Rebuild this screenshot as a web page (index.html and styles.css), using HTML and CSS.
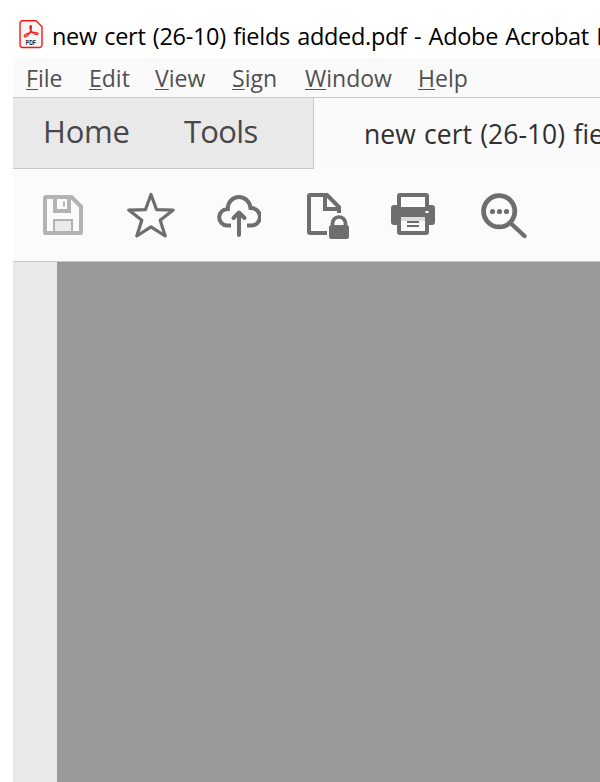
FILE: index.html
```html
<!DOCTYPE html>
<html lang="en">
<head>
<meta charset="utf-8">
<title>new cert (26-10) fields added.pdf - Adobe Acrobat</title>
<link rel="stylesheet" href="styles.css">
</head>
<body>
<div class="window">
  <header class="titlebar">
    <svg class="app-icon" viewBox="0 0 24 30">
      <path d="M3.500 1.800H17l6 6v18.200a2.500 2.500 0 0 1-2.500 2.500h-17A2.500 2.500 0 0 1 1 26V4.300A2.500 2.500 0 0 1 3.500 1.800z" fill="#f5f5f5" stroke="#f5190b" stroke-width="1.400"/>
      <path d="M5.500 17.500c-1-1 2-3 5-3.600 3.500-.7 8-.9 8.300.6.300 1.500-3 1-5-.8-2.200-2-3.600-5.800-2.600-6.800 1.300-1 1.700 1.700.3 5-1.500 3.600-4.600 7-6 5.600z" fill="none" stroke="#f0201c" stroke-width="1.400"/>
      <text class="app-icon-label" x="6.800" y="26" textLength="10" lengthAdjust="spacingAndGlyphs">PDF</text>
    </svg>
    <h1 class="window-title">new cert (26-10) fields added.pdf - Adobe Acrobat Reader</h1>
  </header>
  <nav class="menubar">
    <span class="file"><u>F</u>ile</span>
    <span class="edit"><u>E</u>dit</span>
    <span class="view"><u>V</u>iew</span>
    <span class="sign"><u>S</u>ign</span>
    <span class="win"><u>W</u>indow</span>
    <span class="help"><u>H</u>elp</span>
  </nav>
  <div class="tabs">
    <div class="tab-group"><span class="home">Home</span><span class="tools">Tools</span></div>
    <div class="doc-tab">new cert (26-10) fields added.pdf</div>
  </div>
  <div class="toolbar">
    <svg class="save" width="40" height="48" viewBox="43 192 40 48">
      <path d="M46 197h25.500l9.500 9.500V232a1 1 0 0 1-1 1H46a1 1 0 0 1-1-1V198a1 1 0 0 1 1-1z" fill="none" stroke="#b3b3b3" stroke-width="4"/>
      <path d="M55 196v15H69v-15" fill="none" stroke="#b3b3b3" stroke-width="4"/>
      <path d="M64 201.500v5" stroke="#b3b3b3" stroke-width="2"/>
      <path d="M54 233v-13h18v13" fill="#eaeaea" stroke="#b3b3b3" stroke-width="2"/>
      <path d="M44 233h38" stroke="#b3b3b3" stroke-width="4"/>
    </svg>
    <svg class="star" width="48" height="48" viewBox="127 192 48 48">
      <path d="M151 194.500l5.600 15.200 16.600.400-13 10.200 5 15.700-14.200-9.200-14.200 9.200 5-15.700-13-10.200 16.600-.400z" fill="none" stroke="#6e6e6e" stroke-width="3.200" stroke-linejoin="round"/>
    </svg>
    <svg class="cloud" width="44" height="48" viewBox="217 192 44 48">
      <path d="M231 225.500h-4a8.200 8.200 0 0 1 .8-16.400c-.2-7 5-12 11.200-12 6 0 11 4.600 11.500 11h.5a8.700 8.700 0 0 1 .5 17.400H247" fill="none" stroke="#6e6e6e" stroke-width="4"/>
      <path d="M239 235v-22m-5.500 5l5.500-5.500 5.500 5.500" fill="none" stroke="#6e6e6e" stroke-width="4" stroke-linecap="round" stroke-linejoin="round"/>
    </svg>
    <svg class="lock" width="42" height="48" viewBox="307 192 42 48">
      <path d="M327 233h-17a1 1 0 0 1-1-1v-36a1 1 0 0 1 1-1h17l12 12v6M325 195v14h14" fill="none" stroke="#6e6e6e" stroke-width="4"/>
      <path d="M332.500 226v-2.500a6.500 6.500 0 0 1 13 0v2.500" fill="none" stroke="#6e6e6e" stroke-width="3.700"/>
      <rect x="329" y="225" width="20" height="14" rx="2.500" fill="#6e6e6e"/>
    </svg>
    <svg class="print" width="44" height="48" viewBox="391 192 44 48">
      <path d="M399 209v-13a1 1 0 0 1 1-1h26a1 1 0 0 1 1 1v13" fill="none" stroke="#6e6e6e" stroke-width="4"/>
      <path d="M394 205h3v2h32v-2h3a3 3 0 0 1 3 3v14a3 3 0 0 1-3 3h-38a3 3 0 0 1-3-3v-14a3 3 0 0 1 3-3z" fill="#6e6e6e"/>
      <path d="M399 215h28v17a1 1 0 0 1-1 1h-26a1 1 0 0 1-1-1z" fill="#fbfbfb" stroke="#6e6e6e" stroke-width="4"/>
      <path d="M395 212h36v5h-36z" fill="#6e6e6e"/>
      <path d="M401 217h24v4h-24z" fill="#dcdcdc"/>
      <path d="M407 222h12M407 226h12" stroke="#6e6e6e" stroke-width="2"/>
      <path d="M425.500 212h3" stroke="#fff" stroke-width="2"/>
    </svg>
    <svg class="search" width="46" height="48" viewBox="481 192 46 48">
      <circle cx="499.200" cy="211.300" r="15.600" fill="none" stroke="#6e6e6e" stroke-width="4.800"/>
      <path d="M511 223.500l13.500 12.500" stroke="#6e6e6e" stroke-width="4.400" stroke-linecap="round"/>
      <circle cx="492.500" cy="211.500" r="2.600" fill="#6e6e6e"/><circle cx="499.500" cy="211.500" r="2.600" fill="#6e6e6e"/><circle cx="506.500" cy="211.500" r="2.600" fill="#6e6e6e"/>
    </svg>
  </div>
  <main class="workspace"><aside class="rail"></aside><section class="canvas"></section></main>
</div>
</body>
</html>
```
FILE: styles.css
```css
* { box-sizing: border-box; }
body { margin: 0; background: #fff; font-family: "Open Sans", "Noto Sans", sans-serif; overflow: hidden; }
.window { height: 782px; padding-left: 13px; display: flex; flex-direction: column; white-space: nowrap; }
.titlebar { height: 58px; flex: none; display: flex; padding: 19px 0 0 6px; gap: 9px; }
.app-icon { width: 24px; height: 30px; flex: none; }
.app-icon-label { font: bold 6.500px "Liberation Sans", sans-serif; fill: #222; }
.window-title { margin: 0; flex: 1; min-width: 0; overflow: hidden; font-size: 23.500px; line-height: 34px; font-weight: 400; color: #000; letter-spacing: -0.3px; word-spacing: 1.500px; }
.menubar { height: 40px; flex: none; display: flex; gap: 26px; padding-left: 13px; background: #fafafa; border-bottom: 1px solid #c8c8c8; font-size: 23px; line-height: 40px; color: #505050; }
.menubar u { text-decoration-thickness: 1px; text-underline-offset: 2px; }
.file { width: 37px; }
.edit { width: 40px; }
.view { width: 51px; }
.sign { width: 47px; }
.win { width: 87px; }
.tabs { height: 71px; flex: none; display: flex; background: #fafafa; }
.tab-group { width: 301px; flex: none; display: flex; padding-left: 30px; background: #e9e9e9; border: solid #c8c8c8; border-width: 0 1px 1px 0; color: #484848; font-size: 31px; line-height: 66px; }
.home { width: 141px; letter-spacing: -0.2px; }
.tools { letter-spacing: -0.7px; }
.doc-tab { flex: 1; min-width: 0; padding-left: 50px; overflow: hidden; color: #303030; font-size: 26.500px; line-height: 72px; word-spacing: 1.500px; }
.toolbar { height: 93px; flex: none; display: flex; padding: 23px 0 0 30px; background: #fbfbfb; border-bottom: 1px solid #c8c8c8; }
.toolbar svg { flex: none; }
.save { margin-right: 44px; }
.star { margin-right: 42px; }
.cloud { margin-right: 46px; }
.lock { margin-right: 42px; }
.print { margin-right: 46px; }
.workspace { flex: 1; display: flex; }
.rail { width: 44px; background: #e9e9e9; }
.canvas { flex: 1; background: #999; }
```
